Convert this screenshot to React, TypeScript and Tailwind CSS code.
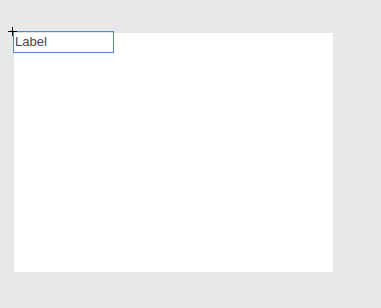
export default function App() {
  return (
    <div className="relative h-[308px] w-[381px] overflow-hidden bg-[#e8e8e8] pt-[33px] pl-[14px]">
      {/* canvas */}
      <div className="h-[239px] w-[319px] bg-white shadow-[0_0_1px_rgba(0,0,0,0.08)]" />

      {/* selected label element */}
      <div className="absolute left-[13px] top-[31px] flex h-[22px] w-[101px] items-center border border-[#4a86c8] pb-[2px] pl-[1px] font-['Liberation_Sans',Arial,sans-serif] text-[13px] leading-none text-[#444]">
        Label
      </div>

      {/* crosshair cursor */}
      <div className="absolute left-[8px] top-[31px] h-px w-[9px] bg-black" />
      <div className="absolute left-[12px] top-[27px] h-[9px] w-px bg-black" />
    </div>
  )
}
